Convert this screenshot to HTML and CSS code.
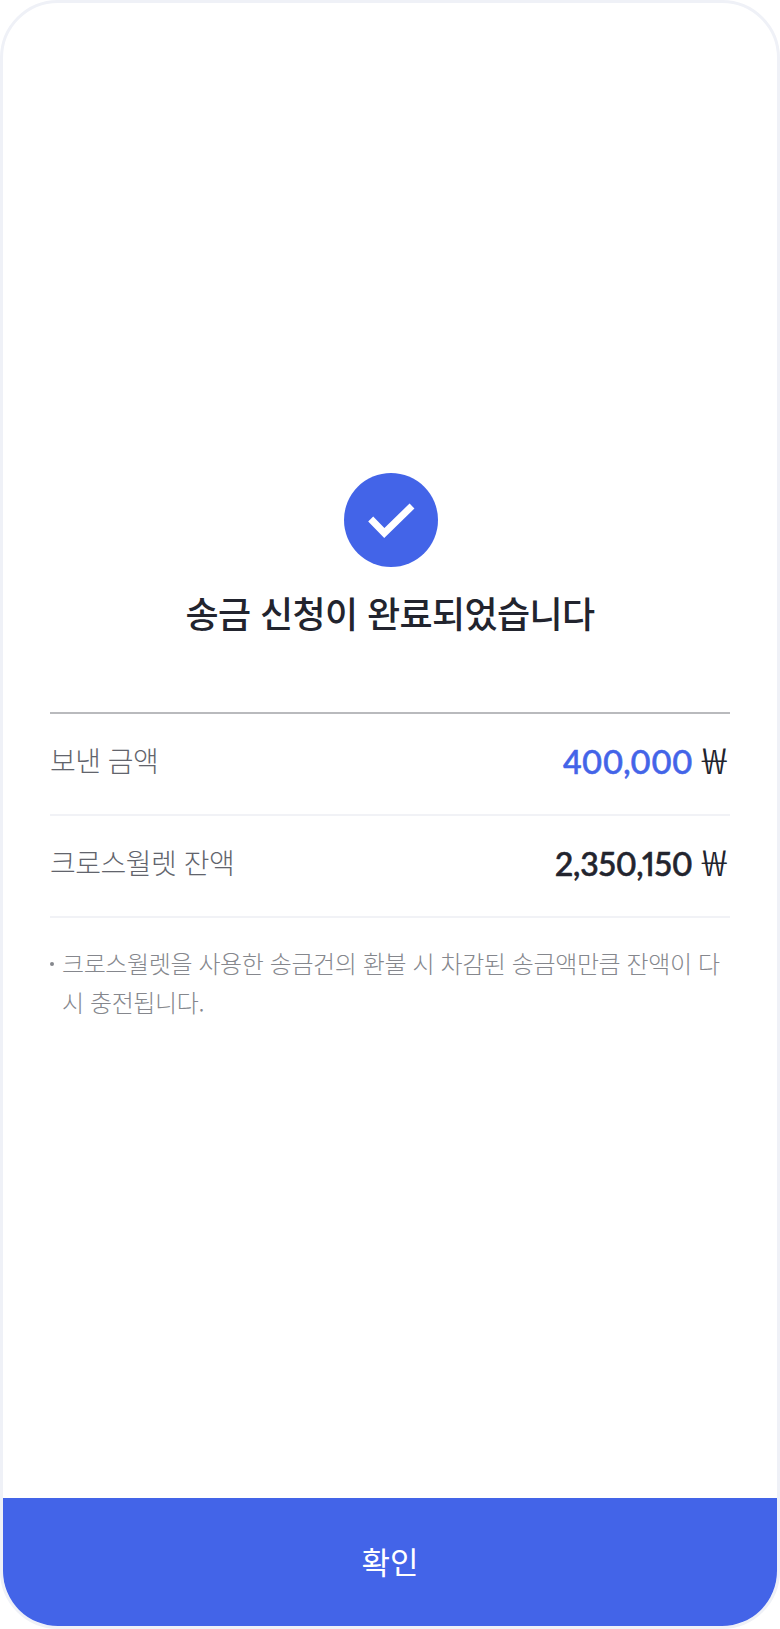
FILE: index.html
```html
<!DOCTYPE html>
<html lang="ko">
<head>
<meta charset="utf-8">
<title>송금 완료</title>
<link rel="stylesheet" href="styles.css">
</head>
<body>
<main class="frame">
  <section class="content">
    <div class="check">
      <svg width="94" height="94" viewBox="0 0 94 94"><circle cx="47" cy="47" r="47" fill="#4364e8"/><path d="M26.700 46L40.300 60L68 33" fill="none" stroke="#fff" stroke-width="7"/></svg>
    </div>
    <h1 class="title">송금 신청이 완료되었습니다</h1>
    <div class="rows">
      <div class="row">
        <span class="label">보낸 금액</span>
        <span class="value"><span class="num blue">400,000</span><span class="cur">₩</span></span>
      </div>
      <div class="row">
        <span class="label">크로스월렛 잔액</span>
        <span class="value"><span class="num">2,350,150</span><span class="cur">₩</span></span>
      </div>
    </div>
    <ul class="notes">
      <li>크로스월렛을 사용한 송금건의 환불 시 차감된 송금액만큼 잔액이 다시 충전됩니다.</li>
    </ul>
  </section>
  <button class="confirm">확인</button>
</main>
</body>
</html>
```
FILE: styles.css
```css
* { box-sizing: border-box; }
html, body { margin: 0; padding: 0; background: #fff; }
body { font-family: "Noto Sans CJK KR", "Noto Sans", sans-serif; }
.frame {
  width: 780px; height: 1629px;
  border: 3px solid #eff1f7; border-radius: 58px;
  overflow: hidden; display: flex; flex-direction: column; background: #fff;
}
.content { flex: 1; padding: 470px 47px 0; display: flex; flex-direction: column; }
.check { display: flex; justify-content: center; height: 94px; padding-left: 2px; }
.title { margin: 21px 0 0; height: 48px; font-size: 36px; line-height: 48px; font-weight: 500; color: #22242e; text-align: center; letter-spacing: -0.6px; }
.rows { margin-top: 76px; border-top: 2px solid #b9babd; }
.row { height: 102px; display: flex; justify-content: space-between; align-items: center; border-bottom: 2px solid #f1f2f6; padding: 0 4px 8px 0; }
.label { font-size: 28px; letter-spacing: -0.5px; color: #62646c; font-weight: 300; }
.value { display: flex; align-items: baseline; gap: 14px; color: #22242e; }
.num { font-family: Lato, "Noto Sans", sans-serif; font-size: 32px; font-weight: 500; font-variant-numeric: proportional-nums; letter-spacing: -0.2px; -webkit-text-stroke: 0.6px currentColor; }
.blue { color: #4364e8; }
.cur { font-size: 36px; font-weight: 300; line-height: 1; transform: scaleX(1.25); transform-origin: right center; }
.notes { list-style: none; margin: 25px 0 0; padding: 0 0 0 12px; }
.notes li { position: relative; font-size: 24px; letter-spacing: -0.4px; line-height: 39px; font-weight: 300; color: #85878d; }
.notes li::before { content: ""; position: absolute; left: -12px; top: 19px; width: 4px; height: 4px; border-radius: 50%; background: #85878d; }
.confirm { flex: none; height: 128px; border: 0; background: #4364e8; color: #fff; font-family: inherit; font-size: 31px; font-weight: 400; padding: 0 0 4px; }
```
